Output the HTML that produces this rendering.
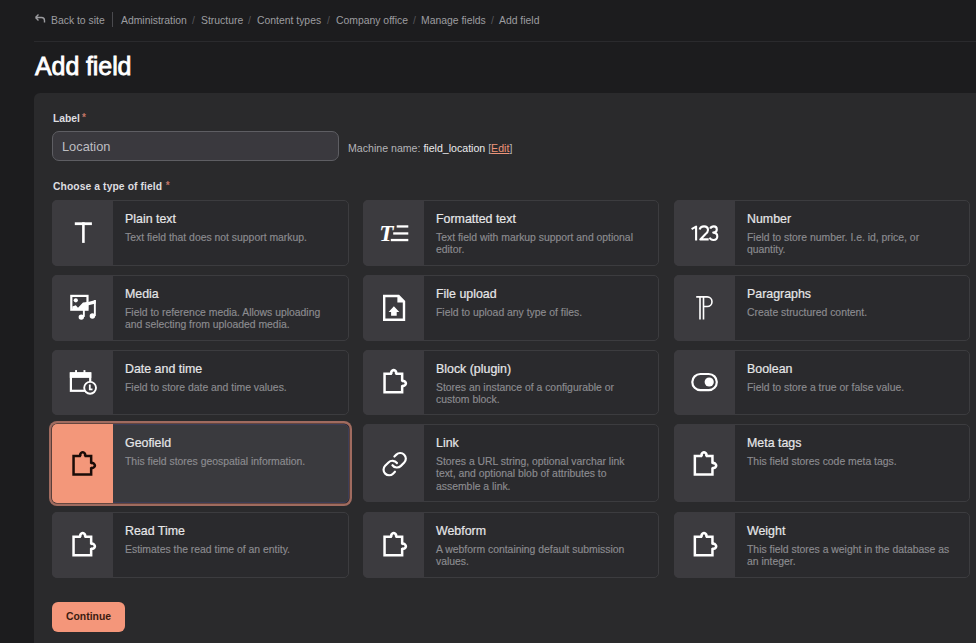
<!DOCTYPE html>
<html><head><meta charset="utf-8">
<style>
*{box-sizing:border-box;margin:0;padding:0}
html,body{width:976px;height:643px;overflow:hidden;background:#1c1c1e;font-family:"Liberation Sans",sans-serif}
.abs{position:absolute}
.bc{position:absolute;top:13.5px;font-size:10.4px;line-height:14px;color:#9c9ca0;white-space:nowrap}
.sl{position:absolute;top:13.5px;font-size:10.4px;line-height:14px;color:#56565a}
.hline{position:absolute;left:34px;top:41px;right:0;height:1px;background:#2a2a2d}
h1{position:absolute;left:35px;top:50px;font-size:25px;line-height:32px;font-weight:400;-webkit-text-stroke:0.8px #fff;color:#fff;letter-spacing:-0.1px;white-space:nowrap}
.panel{position:absolute;left:34px;top:93px;width:1000px;height:700px;background:#2a2a2c;border-radius:6px}
.lbl{position:absolute;font-size:10.3px;line-height:14px;font-weight:700;color:#dedee0;white-space:nowrap}
.ast{color:#c27466;font-size:10px;position:relative;top:-1.5px;margin-left:2px}
.input{position:absolute;left:52px;top:131px;width:287px;height:30px;background:#3a393e;border:1px solid #5e5e63;border-radius:7px}
.input span{position:absolute;left:9px;top:6.5px;font-size:12.8px;line-height:16px;color:#bebec2}
.mach{position:absolute;left:348px;top:140.6px;font-size:10.6px;line-height:14px;color:#b4b4b8;white-space:nowrap}
.mach b{font-weight:400;color:#ececee}
.mach i{font-style:normal;color:#ee9479;text-decoration:underline;text-underline-offset:1px}
.card{position:absolute;width:296px;background:#2a2a2d;border:1px solid #3c3c3f;border-radius:5px}
.ic{position:absolute;left:-1px;top:-1px;bottom:-1px;width:61px;background:#3c3b3f;border-radius:5px 0 0 5px}
.t{position:absolute;left:72px;top:10.8px;-webkit-text-stroke:0.2px #e6e6e8;font-size:12.4px;line-height:15px;color:#e6e6e8;white-space:nowrap}
.d{position:absolute;left:72px;top:30.8px;-webkit-text-stroke:0.15px #8c8c90;width:206px;font-size:10.4px;line-height:12.6px;color:#8c8c90}
.sel{background:#3a3a3e;border-color:#3c3e58;box-shadow:0 0 0 0.6px #2b2221,0 0 0 3px #a06b5f}
.sel .ic{background:#f3977a}
.btn{position:absolute;left:52px;top:602px;width:73px;height:30px;background:#f4967a;border-radius:6px}
.btn span{position:absolute;left:0;right:0;top:8px;text-align:center;font-size:10.4px;line-height:14px;font-weight:700;color:#3b1b10}

</style></head><body>
<svg class="abs" style="left:34px;top:13px" width="12" height="11" viewBox="0 0 12 11"><path d="M1.5 4.5H7.5A3 3 0 0 1 10.5 7.5V9.6M1.5 4.5L4.5 1.5M1.5 4.5L4.5 7.5" fill="none" stroke="#9c9ca0" stroke-width="1.4"/></svg>
<div class="bc" style="left:51px">Back to site</div>
<div class="abs" style="left:112px;top:12px;width:1px;height:15px;background:#4a4a4e"></div>
<div class="bc" style="left:121px">Administration</div>
<div class="sl" style="left:192px">/</div>
<div class="bc" style="left:201px">Structure</div>
<div class="sl" style="left:248px">/</div>
<div class="bc" style="left:257px">Content types</div>
<div class="sl" style="left:327px">/</div>
<div class="bc" style="left:336px">Company office</div>
<div class="sl" style="left:413px">/</div>
<div class="bc" style="left:421px">Manage fields</div>
<div class="sl" style="left:491px">/</div>
<div class="bc" style="left:499px">Add field</div>
<div class="hline"></div>
<h1>Add field</h1>
<div class="panel"></div>
<div class="lbl" style="left:53px;top:112px">Label<span class="ast">*</span></div>
<div class="input"><span>Location</span></div>
<div class="mach">Machine name: <b>field_location</b> [<i>Edit</i>]</div>
<div class="lbl" style="left:53px;top:180px;letter-spacing:0.1px">Choose a type of field<span class="ast" style="margin-left:3.5px">*</span></div>
<div class="card" style="left:52px;top:200px;width:297px;height:66px"><div class="ic"></div><div class="t">Plain text</div><div class="d">Text field that does not support markup.</div></div>
<div class="card" style="left:363px;top:200px;width:296px;height:66px"><div class="ic"></div><div class="t">Formatted text</div><div class="d">Text field with markup support and optional editor.</div></div>
<div class="card" style="left:674px;top:200px;width:296px;height:66px"><div class="ic"></div><div class="t">Number</div><div class="d">Field to store number. I.e. id, price, or quantity.</div></div>
<div class="card" style="left:52px;top:275px;width:297px;height:66px"><div class="ic"></div><div class="t">Media</div><div class="d">Field to reference media. Allows uploading and selecting from uploaded media.</div></div>
<div class="card" style="left:363px;top:275px;width:296px;height:66px"><div class="ic"></div><div class="t">File upload</div><div class="d">Field to upload any type of files.</div></div>
<div class="card" style="left:674px;top:275px;width:296px;height:66px"><div class="ic"></div><div class="t">Paragraphs</div><div class="d">Create structured content.</div></div>
<div class="card" style="left:52px;top:350px;width:297px;height:65px"><div class="ic"></div><div class="t">Date and time</div><div class="d">Field to store date and time values.</div></div>
<div class="card" style="left:363px;top:350px;width:296px;height:65px"><div class="ic"></div><div class="t">Block (plugin)</div><div class="d">Stores an instance of a configurable or custom block.</div></div>
<div class="card" style="left:674px;top:350px;width:296px;height:65px"><div class="ic"></div><div class="t">Boolean</div><div class="d">Field to store a true or false value.</div></div>
<div class="card sel" style="left:52px;top:424px;width:297px;height:79px"><div class="ic"></div><div class="t">Geofield</div><div class="d">This field stores geospatial information.</div></div>
<div class="card" style="left:363px;top:424px;width:296px;height:78px"><div class="ic"></div><div class="t">Link</div><div class="d">Stores a URL string, optional varchar link text, and optional blob of attributes to assemble a link.</div></div>
<div class="card" style="left:674px;top:424px;width:296px;height:78px"><div class="ic"></div><div class="t">Meta tags</div><div class="d">This field stores code meta tags.</div></div>
<div class="card" style="left:52px;top:512px;width:297px;height:66px"><div class="ic"></div><div class="t">Read Time</div><div class="d">Estimates the read time of an entity.</div></div>
<div class="card" style="left:363px;top:512px;width:296px;height:66px"><div class="ic"></div><div class="t">Webform</div><div class="d">A webform containing default submission values.</div></div>
<div class="card" style="left:674px;top:512px;width:296px;height:66px"><div class="ic"></div><div class="t">Weight</div><div class="d">This field stores a weight in the database as an integer.</div></div>
<svg class="abs" style="left:0;top:0" width="976" height="643" viewBox="0 0 976 643">
<rect x="74.8" y="222.3" width="17.1" height="2.8" fill="#fff"/><rect x="82.1" y="222.3" width="2.6" height="20.6" fill="#fff"/>
<text x="379.2" y="240.9" font-family="Liberation Serif" font-style="italic" font-weight="700" font-size="23" fill="#fff" textLength="14.2" lengthAdjust="spacingAndGlyphs">T</text><rect x="396.7" y="225.3" width="11.6" height="2.3" fill="#fff"/><rect x="393.2" y="232.3" width="15.1" height="2.3" fill="#fff"/><rect x="390.8" y="238.9" width="17.5" height="2.3" fill="#fff"/>
<g fill="none" stroke="#fff" stroke-width="2.1" stroke-linejoin="round"><path d="M691.6 229.2L696.1 226.6V240.6"/><path d="M699.6 229.6C700.2 227.3 702 226.4 704 226.4C706.4 226.4 708 227.9 708 230C708 231.8 707 232.9 705.3 234.3L700.3 239.4H708.7"/><path d="M710.2 228.6C710.8 227.2 712.1 226.4 713.8 226.4C715.7 226.4 716.8 227.7 716.8 229.5C716.8 231.3 715.5 232.6 713.2 232.6C715.7 232.6 717.3 234 717.3 236.3C717.3 238.7 715.7 240 713.5 240C711.8 240 710.3 239.2 709.6 237.6"/></g>
<rect x="71.3" y="295.9" width="16.2" height="13.8" fill="none" stroke="#fff" stroke-width="2.2"/><circle cx="75.8" cy="300.3" r="2.1" fill="#fff"/><path d="M72.3 306.5L75.8 305.3L78 307.8L83 302.5L88.2 302V309.2H72.3Z" fill="#fff"/><path d="M83.3 303.2L95.7 300V303.6L84.5 306.2Z" fill="#fff"/><rect x="82.9" y="303.5" width="1.9" height="13.4" fill="#fff"/><rect x="93.9" y="300.1" width="1.9" height="16" fill="#fff"/><circle cx="81.3" cy="317.1" r="2.7" fill="#fff"/><circle cx="92.4" cy="316" r="2.7" fill="#fff"/>
<path d="M384.2 296H398.6L404 301.4V319.8H384.2Z" fill="none" stroke="#fff" stroke-width="2.4"/><path d="M397.4 295.2V302.6H404.8Z" fill="#fff"/><path d="M388.6 312L393.9 306.2L399.3 312H396.7V315.8H391.1V312Z" fill="#fff"/>
<path d="M696.2 296.9H707.2A4.8 4.8 0 0 1 707.2 306.5H703.5M700 296.9V319.5M703.5 296.9V319.5" fill="none" stroke="#fff" stroke-width="1.6"/>
<rect x="70.9" y="373.4" width="19.3" height="17.4" fill="none" stroke="#fff" stroke-width="2.2"/><rect x="69.8" y="372.3" width="21.5" height="5.6" fill="#fff"/><rect x="75.1" y="370.1" width="1.9" height="3" fill="#fff"/><rect x="83.5" y="370.1" width="1.9" height="3" fill="#fff"/><circle cx="90.1" cy="387.8" r="5.9" fill="#3c3b3f" stroke="#fff" stroke-width="1.9"/><path d="M89.8 384.6V389.3H92.5" fill="none" stroke="#fff" stroke-width="1.8"/>
<g transform="translate(383.3 372.59999999999997)"><path d="M1.25 1.25H8.35A2.4 2.4 0 1 1 12.45 1.25H18.85V8.75A2.4 2.4 0 1 1 18.85 12.85V19.7H1.25Z" fill="none" stroke="#fff" stroke-width="2.5" stroke-linejoin="miter" stroke-miterlimit="1.5"/></g>
<rect x="692.3" y="374" width="24.5" height="16.1" rx="8.05" fill="none" stroke="#fff" stroke-width="2.2"/><circle cx="709.2" cy="382" r="4.6" fill="#fff"/>
<g transform="translate(72.3 454.7)"><path d="M1.25 1.25H8.35A2.4 2.4 0 1 1 12.45 1.25H18.85V8.75A2.4 2.4 0 1 1 18.85 12.85V19.7H1.25Z" fill="none" stroke="#1a0c08" stroke-width="2.5" stroke-linejoin="miter" stroke-miterlimit="1.5"/></g>
<g transform="translate(381.25 450.7) scale(1.12)" fill="none" stroke="#fff" stroke-width="1.96" stroke-linecap="round" stroke-linejoin="round"><path d="M10 13a5 5 0 0 0 7.54.54l3-3a5 5 0 0 0-7.07-7.07l-1.72 1.71"/><path d="M14 11a5 5 0 0 0-7.54-.54l-3 3a5 5 0 0 0 7.07 7.07l1.71-1.71"/></g>
<g transform="translate(693.6 454.8)"><path d="M1.25 1.25H8.35A2.4 2.4 0 1 1 12.45 1.25H18.85V8.75A2.4 2.4 0 1 1 18.85 12.85V19.7H1.25Z" fill="none" stroke="#fff" stroke-width="2.5" stroke-linejoin="miter" stroke-miterlimit="1.5"/></g>
<g transform="translate(72.3 535.5)"><path d="M1.25 1.25H8.35A2.4 2.4 0 1 1 12.45 1.25H18.85V8.75A2.4 2.4 0 1 1 18.85 12.85V19.7H1.25Z" fill="none" stroke="#fff" stroke-width="2.5" stroke-linejoin="miter" stroke-miterlimit="1.5"/></g>
<g transform="translate(383.3 535.5)"><path d="M1.25 1.25H8.35A2.4 2.4 0 1 1 12.45 1.25H18.85V8.75A2.4 2.4 0 1 1 18.85 12.85V19.7H1.25Z" fill="none" stroke="#fff" stroke-width="2.5" stroke-linejoin="miter" stroke-miterlimit="1.5"/></g>
<g transform="translate(693.6 535.5)"><path d="M1.25 1.25H8.35A2.4 2.4 0 1 1 12.45 1.25H18.85V8.75A2.4 2.4 0 1 1 18.85 12.85V19.7H1.25Z" fill="none" stroke="#fff" stroke-width="2.5" stroke-linejoin="miter" stroke-miterlimit="1.5"/></g>
</svg>
<div class="btn"><span>Continue</span></div>
</body></html>
